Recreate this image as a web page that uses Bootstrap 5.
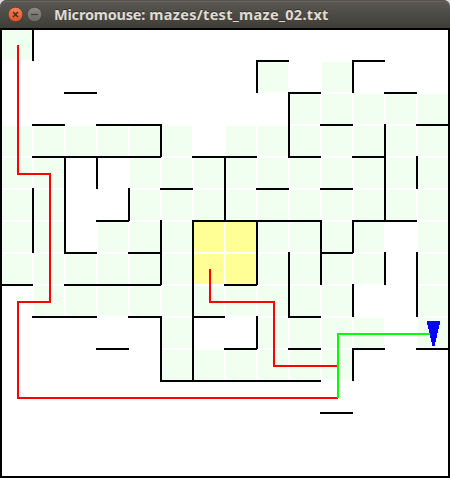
<!DOCTYPE html>
<html lang="en">
<head>
<meta charset="utf-8">
<meta name="viewport" content="width=device-width, initial-scale=1">
<title>Micromouse</title>
<link href="https://cdn.jsdelivr.net/npm/bootstrap@5.3.0/dist/css/bootstrap.min.css" rel="stylesheet">
<style>
body{background:#d9d8dc;font-family:"Noto Sans","Open Sans",sans-serif}
.app-window{width:450px;height:478px}
.title-bar{height:28px;padding-left:8px;border-radius:7px 7px 0 0;background:linear-gradient(#5b5952,#3e3d38);box-shadow:inset 0 1px #55534d,inset 0 2px #69665e}
.win-btn{width:15px;height:15px;margin-right:4px}
.title-text{font-size:14.5px;line-height:28px;font-weight:700;color:#dfdbd2;margin-left:8px;letter-spacing:.31px;text-shadow:0 -1px #33322e;white-space:nowrap}
.app-name{letter-spacing:-.2px}
.maze{shape-rendering:crispEdges}
</style>
<script src="https://cdn.jsdelivr.net/npm/bootstrap@5.3.0/dist/js/bootstrap.bundle.min.js"></script>
</head>
<body class="m-0 overflow-hidden">
<main class="app-window d-flex flex-column">
<header class="title-bar d-flex align-items-center flex-shrink-0">
<svg class="win-btn" viewBox="0 0 15 15" role="img" aria-label="Close"><defs><linearGradient id="o" x2="0" y2="1"><stop stop-color="#f5835d"/><stop offset="1" stop-color="#e2501e"/></linearGradient><linearGradient id="g" x2="0" y2="1"><stop stop-color="#8d8b84"/><stop offset="1" stop-color="#6a6862"/></linearGradient></defs><circle cx="7.5" cy="7.5" r="7.3" fill="url(#o)" stroke="#35332e" stroke-width=".6"/><path d="M5 5l5 5M10 5l-5 5" stroke="#3f2a20" stroke-width="1.3"/></svg>
<svg class="win-btn" viewBox="0 0 15 15" role="img" aria-label="Minimize"><circle cx="7.5" cy="7.5" r="7.3" fill="url(#g)" stroke="#35332e" stroke-width=".6"/><path d="M4 7.5h7" stroke="#3c3b37" stroke-width="1.2"/></svg>
<span class="title-text"><span class="app-name">Micromouse:</span> mazes/test_maze_02.txt</span>
</header>
<svg class="maze d-block bg-white" width="450" height="450" viewBox="0 0 450 450" role="img" aria-label="Maze">
<g id="cells"></g>
<path id="walls" fill="none" stroke="#000" stroke-width="2"/>
<rect x="1" y="1" width="448" height="448" fill="none" stroke="#000" stroke-width="2"/>
<path d="M18 17V146H50V274H18V370H338M210 241V274H274V338H338" fill="none" stroke="#f00" stroke-width="2"/>
<path d="M338 370V306H430" fill="none" stroke="#0f0" stroke-width="2"/>
<path d="M427 293h13v4h-1v4h-1v4h-1v5h-1v4h-1v4h-3v-4h-1v-4h-1v-5h-1v-4h-1v-4h-1z" fill="#00f"/>
</svg>
</main>
<script>
// One string per maze row: g = visited, y = goal, . = unvisited
const rows = ["g.............","........g.g...",".........ggggg","gggggg.ggggggg","gg..gggggggggg","gg..gggggggggg","gg.gggyygggg.g","ggggggyygggg.g",".gggggggggg..g",".....g..gggg.g",".....gggggg...","..............","..............",".............."];
const colors = {g:"#f0fff0", y:"#ffff96"};
let cells = "";
rows.forEach((row, r) => [...row].forEach((c, x) => {
  if (colors[c]) cells += `<rect x="${32*x+2}" y="${32*r+2}" width="30" height="30" fill="${colors[c]}"/>`;
}));
document.getElementById("cells").innerHTML = cells;
// Walls: grid line index -> [from, to] spans
const horizontal = {1:[[8,9],[11,12]],2:[[2,3],[9,10],[12,13]],3:[[1,2],[3,5],[10,11],[13,14]],4:[[1,5],[6,8],[9,10],[11,12]],5:[[5,6],[8,9],[10,11]],6:[[3,4],[6,10],[11,13]],7:[[2,3],[4,5],[10,11]],8:[[0,1],[2,5],[7,8]],9:[[1,3],[4,5],[6,7],[9,10]],10:[[3,4],[7,8],[9,10],[11,12],[13,14]],11:[[5,10]],12:[[10,11]]};
const vertical = {1:[[0,1],[5,7]],2:[[4,7]],3:[[4,5]],4:[[5,6]],5:[[3,4],[6,8],[9,11]],6:[[6,11]],7:[[4,6]],8:[[1,2],[6,8],[9,10]],9:[[2,4],[7,9]],10:[[6,8]],11:[[1,2],[6,7],[8,9],[10,11]],12:[[3,6],[7,8]],13:[[4,5],[7,9]]};
let d = "";
for (const k in horizontal) for (const [a, b] of horizontal[k]) d += `M${32*a} ${32*k+1}H${32*b+1}`;
for (const k in vertical) for (const [a, b] of vertical[k]) d += `M${32*k+1} ${32*a}V${32*b+1}`;
document.getElementById("walls").setAttribute("d", d);
</script>
</body>
</html>
